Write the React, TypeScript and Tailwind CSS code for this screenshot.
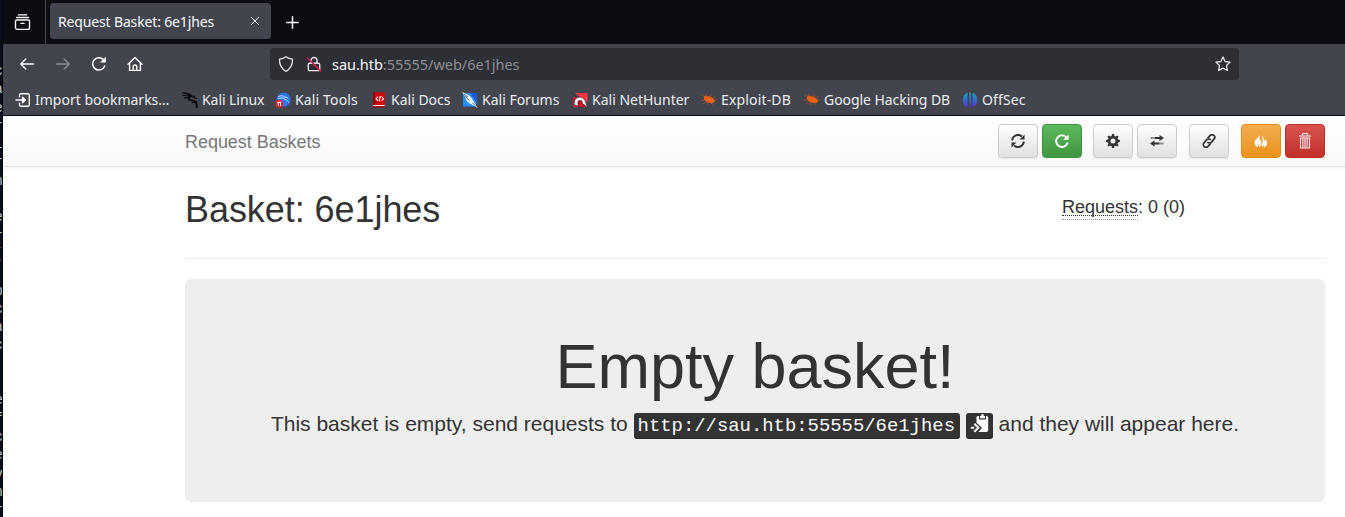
import type { ReactNode } from "react";

const uiFont = "font-['Noto_Sans',sans-serif]";
const pageFont = "font-['Liberation_Sans',Arial,sans-serif]";

const terminalColumn = ["c", "a", "e", "r", "l", "r", "n", "", "e", "r", "(", "", "p", "c", "a", "c", "", "", "e", "f", "c", "e", "v", "n", "r"];

function Line({ children, size = 16, className = "" }: { children: ReactNode; size?: number; className?: string }) {
  return (
    <svg width={size} height={size} viewBox="0 0 16 16" fill="none" stroke="currentColor" strokeWidth="1.3" strokeLinecap="round" strokeLinejoin="round" className={`shrink-0 ${className}`}>
      {children}
    </svg>
  );
}

function Glyph({ children, w = 14, h = 14 }: { children: ReactNode; w?: number; h?: number }) {
  return (
    <svg width={w} height={h} viewBox={`0 0 ${w} ${h}`} fill="currentColor" className="shrink-0">
      {children}
    </svg>
  );
}

const ImportIcon = () => (
  <Line>
    <path d="M4.5 4.8V3.2c0-.9.6-1.5 1.5-1.5h6.8c.9 0 1.5.6 1.5 1.5v9.6c0 .9-.6 1.5-1.5 1.5H6c-.9 0-1.5-.6-1.5-1.5v-1.6M1 8h8.5" strokeWidth="1.4" />
    <path d="M7.5 5.2 10.5 8l-3 2.8z" fill="currentColor" />
  </Line>
);
const Dragon = () => (
  <svg width="16" height="16" viewBox="0 0 16 16" fill="none" stroke="#08090b" strokeLinecap="round" className="shrink-0">
    <path d="M.5 1C4 .8 7.500 1.800 9.500 4M1 3.500c3-.7 5.500-.4 7.500 1M2.500 6c2-1 3.500-1.200 5-.7" strokeWidth="1.200" />
    <path d="M8 4.500C5.800 5.700 6.200 8 9 8.400c3 .4 5 1.300 5.500 3.300.3 1.500.3 2.400.4 3.600" strokeWidth="1.900" />
    <path d="M8.500 4.200c2 .2 3.500.5 4.800 2l1 .2M10.500 4.500l1.700-.2M13 10.500c-1-.5-2-.4-2.600.4M12.500 9.500l2 .5" strokeWidth="1.300" />
  </svg>
);
const ToolsIcon = () => (
  <svg width="16" height="16" viewBox="0 0 16 16" className="shrink-0">
    <circle cx="8.500" cy="7.700" r="7" fill="#2777ff" />
    <path d="M3 4.700c3-1.600 6-1 7.500 1.200M3 7c2-1.200 4.300-1.400 6-.5M9 5.800c-1.200 2 3.700 1.400 5 5M10 5.200c1.500-.2 2.600.5 3 1.200" stroke="#dceaff" strokeWidth=".9" fill="none" />
    <circle cx="4.300" cy="11.800" r="4" fill="#e82127" />
    <path d="M2.200 10.300h4.200M3.300 10.300v3.600M5.500 10.300v3.600" stroke="#fff" fill="none" />
  </svg>
);
const DocsIcon = () => (
  <svg width="16" height="16" viewBox="0 0 16 16" className="shrink-0">
    <path d="M2 .5h12V13H2z" fill="#d4000c" />
    <path d="M2 .5h2V13H2z" fill="#8e0008" />
    <path d="M2 13h12v1H2z" fill="#f6f0f0" />
    <path d="M2 14h12v1.500H2z" fill="#a5000b" />
    <path d="M7 4.500 5 6.700 7 9M10.500 4.500l2 2.200-2 2.300M9.300 4 8.200 9.300" stroke="#fff" strokeWidth="1.100" fill="none" />
  </svg>
);
const ForumsIcon = () => (
  <svg width="16" height="16" viewBox="0 0 16 16" className="shrink-0">
    <path d="M1 1h14v10l-2 3.500H1z" fill="#248fff" />
    <path d="M8 1h7v10z" fill="#175ce1" />
    <path d="M0 0c3 1.300 5.500 2.500 7.500 4 2.500 1.500 3 4 4.300 6.100L15.800 16l-6-3.600C7.500 11.300 4.800 10 4.200 7.500 3.500 4.800 2 2.300 0 0z" fill="#fff" />
    <path d="m2 2 4 3.200M3.300 4.300 7 8m3 2.400 4 4.100" stroke="#313944" strokeWidth=".8" />
  </svg>
);
const NetHunterIcon = () => (
  <svg width="16" height="16" viewBox="0 0 16 16" className="shrink-0">
    <path d="M3 1h12.500v9.800z" fill="#ff3542" />
    <path d="M1 5h4l10 9.800H1z" fill="#d8072c" />
    <path d="M.5 1.500 4.500 5M2.500 12.800C1.700 9 3.400 5.300 7.400 5.200c3 0 5.400 1.800 6.400 5.800l1.700 4-5-3.200c.2-2.400-1-3.700-2.600-3.600-2 .1-2.700 2.300-1.500 5.800z" fill="#fff" stroke="#262832" strokeWidth=".6" />
  </svg>
);
const BugIcon = () => (
  <svg width="16" height="16" viewBox="0 0 16 16" className="shrink-0">
    <path d="M3 4.500c2.200-.9 6-.2 8.500 1.500 1.700 1.200 2.600 2.600 2.200 3.800-1.200 1.500-5 1.600-7.700.3C3.600 9 2.200 6.400 3 4.500z" fill="#f26212" />
    <path d="m4 5-2.700-2M5.700 4.500 4.300 2M9 5l1-2.800M12 6.500l2.500-2M13.300 8.200l2.500-.5M3 8l-2.700.5M5 9.500 1.800 12M7 10.500l-1 2.400M10 10.500l2 2.200" stroke="#b65227" strokeWidth=".8" />
  </svg>
);
const OffSecIcon = () => (
  <svg width="16" height="16" viewBox="0 0 16 16" className="shrink-0">
    <defs>
      <linearGradient id="offsec" x1="0" y1="0" x2="0" y2="1">
        <stop stopColor="#16a8c4" />
        <stop offset="1" stopColor="#5630d8" />
      </linearGradient>
    </defs>
    <path d="M5.500.8v14.400C2.800 14.200.8 11.500.8 8s2-6.200 4.700-7.200zM7.300.5h1.600v15H7.300zM10.600.8c2.700 1 4.700 3.700 4.700 7.200s-2 6.200-4.700 7.200z" fill="url(#offsec)" />
  </svg>
);

const bookmarks: { label: string; icon: ReactNode; box: string; text: string }[] = [
  { label: "Import bookmarks…", icon: <ImportIcon />, box: "w-[167px]", text: "ml-1" },
  { label: "Kali Linux", icon: <Dragon />, box: "w-[93px]", text: "ml-1 tracking-[-0.06px]" },
  { label: "Kali Tools", icon: <ToolsIcon />, box: "w-[96px]", text: "ml-1 tracking-[0.14px]" },
  { label: "Kali Docs", icon: <DocsIcon />, box: "w-[91px]", text: "ml-1" },
  { label: "Kali Forums", icon: <ForumsIcon />, box: "w-[110px]", text: "ml-1" },
  { label: "Kali NetHunter", icon: <NetHunterIcon />, box: "w-[129px]", text: "ml-1" },
  { label: "Exploit-DB", icon: <BugIcon />, box: "w-[103px]", text: "ml-1 tracking-[0.16px]" },
  { label: "Google Hacking DB", icon: <BugIcon />, box: "w-[158px]", text: "ml-1 tracking-[-0.06px]" },
  { label: "OffSec", icon: <OffSecIcon />, box: "w-[80px]", text: "ml-1 tracking-[0.14px]" },
];

const plain = "border-[#ccc] bg-linear-to-b from-white to-[#e0e0e0] text-[#333] shadow-[inset_0_1px_0_rgba(255,255,255,.15),0_1px_1px_rgba(0,0,0,.075)]";

function ToolButton({ tone, className = "", label, children }: { tone: string; className?: string; label: string; children: ReactNode }) {
  return (
    <button aria-label={label} className={`flex h-[34px] w-10 shrink-0 items-center justify-center rounded border ${tone} ${className}`}>
      {children}
    </button>
  );
}

function BrowserChrome() {
  return (
    <header className={`${uiFont} h-[116px] shrink-0 border-b border-[#0c0c13] bg-[#42454d] text-[#fbfbfe]`}>
      <div className="flex h-11 bg-[#0c0d11]">
        <div className="flex w-[43px] items-center justify-center border-r border-[#45474d] pr-[3px]">
          <Line size={17}>
            <path d="M4 .8h8M2.500 3.300h11M2.400 5.700h11.200c.7 0 1 .4 1 1v6c0 1-.7 1.800-1.800 1.800H3.200c-1.100 0-1.800-.8-1.800-1.800v-6c0-.6.3-1 1-1zM6.400 8.800h3.200" />
          </Line>
        </div>
        <div className="ml-1 mt-[3px] flex h-9 w-[221px] items-center rounded bg-[#42454d] pl-2 pr-[11px]">
          <span className="flex-1 whitespace-nowrap text-[14px] tracking-[-0.15px]">Request Basket: 6e1jhes</span>
          <Line size={10}><path d="m2 2 12 12M14 2 2 14" strokeWidth="1.600" /></Line>
        </div>
        <div className="ml-[15px] flex items-center">
          <Line size={13}><path d="M8 1v14M1 8h14" strokeWidth="1.800" /></Line>
        </div>
      </div>
      <div className="flex h-10 items-center">
        <Line className="ml-4"><path d="M14.500 8H1.800m5-5-5 5 5 5" strokeWidth="1.500" /></Line>
        <Line className="ml-5 text-[#85878d]"><path d="M1.500 8h12.700m-5-5 5 5-5 5" strokeWidth="1.500" /></Line>
        <Line className="ml-5"><path d="M13.700 10a6.200 6.200 0 1 1-1.200-6.300l1.500 1.600" strokeWidth="1.500" /><path d="M14.500 1.500v4.700H9.800z" fill="currentColor" strokeWidth=".6" /></Line>
        <Line className="ml-5"><path d="M1 8.200 8 1.400l7 6.800M2.600 7v7.400h10.800V7M6.200 14.200v-3.400c0-2.400 3.600-2.400 3.600 0v3.400" strokeWidth="1.400" /></Line>
        <div className="ml-[127px] flex h-8 w-[969px] items-center rounded bg-[#2e2f34] px-2">
          <Line className="text-[#e5e5e8]"><path d="M8 .8c2 1.400 4.200 2.100 6.500 2.300.2 5.600-1.700 9.700-6.500 12.200C3.200 12.800 1.300 8.700 1.500 3.100 3.800 2.900 6 2.200 8 .8z" /></Line>
          <Line className="ml-3 text-[#e5e5e8]">
            <path d="M5 7V4.300c0-3.800 6-3.800 6 0V7M3.500 7.200h9c.8 0 1.200.4 1.200 1.200v5c0 .8-.4 1.200-1.200 1.200h-9c-.8 0-1.200-.4-1.200-1.200v-5c0-.8.4-1.200 1.200-1.200z" strokeWidth="1.400" />
            <path d="m1.500 2 13.200 13" stroke="#e8194d" strokeWidth="1.500" />
          </Line>
          <span className="ml-[10px] flex-1 pt-px text-[14.500px] tracking-[-0.03px] text-[#8d8e92]"><span className="text-[#fbfbfe]">sau.htb</span>:55555/web/6e1jhes</span>
          <Line className="text-[#e5e5e8]"><path d="m8 1 2.100 4.500 5 .6-3.600 3.400.9 5L8 12.100l-4.400 2.400.9-5L.9 6.100l5-.6z" /></Line>
        </div>
      </div>
      <nav className="flex h-[31px] items-center pl-3">
        {bookmarks.map((b) => (
          <div key={b.label} className={`flex shrink-0 items-center whitespace-nowrap ${b.box}`}>
            {b.icon}
            <span className={`text-[14px] text-[#ededf1] ${b.text}`}>{b.label}</span>
          </div>
        ))}
      </nav>
    </header>
  );
}

function PageNav() {
  return (
    <nav className="flex h-[51px] shrink-0 items-start border-b border-[#e7e7e7] bg-linear-to-b from-white to-[#f8f8f8] pl-[182px] pt-2 shadow-[0_1px_5px_rgba(0,0,0,.075)]">
      <span className="w-[813px] pt-1 text-[18px] leading-7 tracking-[-0.04px] text-[#777]">Request Baskets</span>
      <ToolButton label="Refresh" tone={plain}>
        <Glyph>
          <path d="M1.200 6.400A5.800 5.800 0 0 1 10.900 2.500M12.800 7.600a5.800 5.800 0 0 1-9.700 3.900" fill="none" stroke="currentColor" strokeWidth="1.900" />
          <path d="M13.500.5v5H8.700zM.5 13.500v-5h4.800z" />
        </Glyph>
      </ToolButton>
      <ToolButton label="Auto refresh" className="ml-1" tone="border-[#3e8f3e] bg-linear-to-b from-[#5cb85c] to-[#419641] text-white">
        <Glyph>
          <path d="M10.900 2.900A5.800 5.800 0 1 0 12.600 8.500" fill="none" stroke="currentColor" strokeWidth="1.900" />
          <path d="M13.600.6v5.200H8.200z" />
        </Glyph>
      </ToolButton>
      <ToolButton label="Settings" className="ml-[11px]" tone={plain}>
        <Glyph>
          <circle cx="7" cy="7" r="3.900" fill="none" stroke="currentColor" strokeWidth="2.800" />
          <g>
            <path id="tooth" d="M5.600 2 6 .1h2L8.400 2z" />
            <path d="M5.600 2 6 .1h2L8.400 2z" transform="rotate(45 7 7)" />
            <path d="M5.600 2 6 .1h2L8.400 2z" transform="rotate(90 7 7)" />
            <path d="M5.600 2 6 .1h2L8.400 2z" transform="rotate(135 7 7)" />
            <path d="M5.600 2 6 .1h2L8.400 2z" transform="rotate(180 7 7)" />
            <path d="M5.600 2 6 .1h2L8.400 2z" transform="rotate(225 7 7)" />
            <path d="M5.600 2 6 .1h2L8.400 2z" transform="rotate(270 7 7)" />
            <path d="M5.600 2 6 .1h2L8.400 2z" transform="rotate(315 7 7)" />
          </g>
        </Glyph>
      </ToolButton>
      <ToolButton label="Forwarding" className="ml-1" tone={plain}>
        <Glyph>
          <path d="M4.500 3h5V1L14 4 9.500 7V5h-5zM2.500 3h1v2h-1zM.800 3h.800v2H.800zM9.500 8.500h-5v-2L0 9.500l4.500 3v-2h5zM10.500 8.500h1v2h-1zM12.500 8.500h.8v2h-.8z" />
        </Glyph>
      </ToolButton>
      <ToolButton label="Share" className="ml-3" tone={plain}>
        <Glyph>
          <g fill="none" stroke="currentColor" strokeWidth="1.700" transform="rotate(-49 7 7)">
            <path d="M6 9.800H2.300a2.700 2.700 0 0 1 0-5.400h3.900a2.700 2.700 0 0 1 2.600 3.200" />
            <path d="M8 4.200h3.700a2.700 2.700 0 0 1 0 5.400H7.800a2.700 2.700 0 0 1-2.600-3.200" />
          </g>
        </Glyph>
      </ToolButton>
      <ToolButton label="Clear" className="ml-3" tone="border-[#e38d13] bg-linear-to-b from-[#f0ad4e] to-[#eb9316] text-white">
        <Glyph>
          <path d="M5.200 0c.4 2.500-.3 3.600 1.200 6 1.100 1.700 1.500 4-.2 6.300-.4.500-.8.900-1.300 1.200.3-1.700-.1-2.600-.8-3.700-.5 1.200-.6 2.200-.2 3.600C1.400 12.300.1 9.800.8 7.500 1.600 4.900 5.100 3.500 5.200 0z" />
          <path d="M9 2c.2 1.600.1 2.300 1.200 3.700.5.700.7 1.200.6 2 .7-.7.900-1.500.8-2.500 2.200 2.300 2.200 6.200-1.600 8.400.2-1.400-.1-2-.5-2.700-.5.800-.6 1.500-.4 2.500-1.700-1.200-1.700-2.700-.8-4.500C9.200 7 9 6 8.300 4.800 7.900 3.800 8.200 2.800 9 2z" />
        </Glyph>
      </ToolButton>
      <ToolButton label="Delete" className="ml-1" tone="border-[#b92c28] bg-linear-to-b from-[#d9534f] to-[#c12e2a] text-white">
        <Glyph w={14} h={16}>
          <path d="M4.500 2.500v-2h5v2M1 3h12M2.500 5v10h9V5zM4.900 5.500v9M7 5.500v9M9.100 5.500v9" fill="none" stroke="currentColor" />
        </Glyph>
      </ToolButton>
    </nav>
  );
}

export default function App() {
  return (
    <div className="flex h-[517px] w-[1345px] overflow-hidden bg-white">
      <aside className="flex w-[3px] shrink-0 flex-col items-end overflow-hidden border-r border-black bg-[#06101f] pt-[62px] font-['Liberation_Mono',monospace] text-[14px] leading-[18.300px] text-[#c5cad2]">
        {terminalColumn.map((ch, i) => (
          <span key={i} className="-mr-px h-[18.300px] shrink-0 opacity-95">{ch}</span>
        ))}
      </aside>
      <div className={`flex w-[1342px] flex-col ${pageFont}`}>
        <BrowserChrome />
        <PageNav />
        <main className="ml-[182px] w-[1140px] text-[#333]">
          <div className="flex h-[92px] items-start border-b border-[#eee]">
            <h1 className="w-[877px] pt-[23px] text-[36px] leading-10 tracking-[-0.06px]">Basket: 6e1jhes</h1>
            <div className="flex pt-[29px] text-[18px] leading-5">
              <span className="h-[24px] border-b border-dotted border-[#999]"><span className="block h-5 border-b border-dotted border-[#333] leading-[22px]">Requests</span></span>
              <span className="leading-[22px]">: 0 (0)</span>
            </div>
          </div>
          <section className="mt-5 flex h-[223px] flex-col items-center rounded-md bg-[#eee] pt-[53px]">
            <h2 className="text-[63px] leading-[69px]">Empty basket!</h2>
            <p className="mt-[8px] flex items-center whitespace-pre text-[21px] leading-[30px]">
              <span>This basket is empty, send requests to </span>
              <kbd className="mt-1 flex h-[26px] w-[326px] items-center rounded-[3px] bg-[#333] pl-1 font-['Liberation_Mono',monospace] text-[18.900px] leading-[26px] text-white shadow-[inset_0_-1px_0_rgba(0,0,0,.25)]">http://sau.htb:55555/6e1jhes</kbd>
              <kbd className="mx-[6px] mt-1 flex h-[26px] w-[27px] items-start justify-center rounded-[3px] bg-[#333] pt-px text-white shadow-[inset_0_-1px_0_rgba(0,0,0,.25)]">
                <Glyph w={19} h={19}>
                  <path d="M7.500 2H9v3.500h7V2h1l1.200 1.200v13.300L17 18H8.500l3.500-4.200-5.500-5V3z" />
                  <path d="M10 4.300V2h1.200c0-2.700 2.600-2.700 2.600 0H15v2.300zM.8 12.800h3.500v2H.8z" />
                  <path d="m4.300 9.800 4.200 4-4.200 4" fill="none" stroke="currentColor" strokeWidth="2" />
                </Glyph>
              </kbd>
              <span>and they will appear here.</span>
            </p>
          </section>
        </main>
      </div>
    </div>
  );
}
